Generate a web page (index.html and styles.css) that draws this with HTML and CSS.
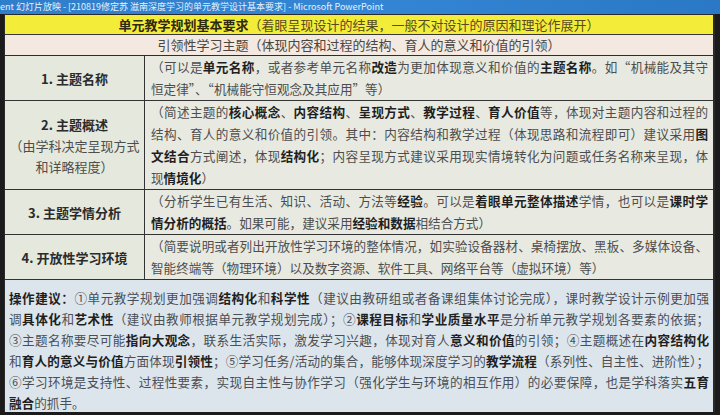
FILE: index.html
```html
<!DOCTYPE html>
<html lang="zh-CN">
<head>
<meta charset="utf-8">
<link rel="stylesheet" href="styles.css">
</head>
<body>
<div class="screen">
  <div class="titlebar">ent 幻灯片放映 - [210819修定苏 滋南深度学习的单元教学设计基本要求] - Microsoft PowerPoint</div>
  <div class="slide">
    <div class="hdr-yellow"><b>单元教学规划基本要求</b>（着眼呈现设计的结果，一般不对设计的原因和理论作展开）</div>
    <div class="hdr-beige">引领性学习主题（体现内容和过程的结构、育人的意义和价值的引领）</div>

    <div class="row">
      <div class="cell-l"><div class="lbl">1. 主题名称</div></div>
      <div class="cell-r">
        <div class="ln">（可以是<b>单元名称</b>，或者参考单元名称<b>改造</b>为更加体现意义和价值的<b>主题名称</b>。如“机械能及其守</div>
        <div class="ln last">恒定律”、“机械能守恒观念及其应用”等）</div>
      </div>
    </div>

    <div class="row">
      <div class="cell-l">
        <div class="lbl">2. 主题概述</div>
        <div class="sub">（由学科决定呈现方式</div>
        <div class="sub">和详略程度）</div>
      </div>
      <div class="cell-r">
        <div class="ln">（简述主题的<b>核心概念</b>、<b>内容结构</b>、<b>呈现方式</b>、<b>教学过程</b>、<b>育人价值</b>等，体现对主题内容和过程的</div>
        <div class="ln">结构、育人的意义和价值的引领。其中：内容结构和教学过程（体现思路和流程即可）建议采用<b>图</b></div>
        <div class="ln"><b>文结合</b>方式阐述，体现<b>结构化</b>；内容呈现方式建议采用现实情境转化为问题或任务名称来呈现，体</div>
        <div class="ln last">现<b>情境化</b>）</div>
      </div>
    </div>

    <div class="row">
      <div class="cell-l"><div class="lbl">3. 主题学情分析</div></div>
      <div class="cell-r">
        <div class="ln">（分析学生已有生活、知识、活动、方法等<b>经验</b>。可以是<b>着眼单元整体描述</b>学情，也可以是<b>课时学</b></div>
        <div class="ln last"><b>情分析的概括</b>。如果可能，建议采用<b>经验和数据</b>相结合方式）</div>
      </div>
    </div>

    <div class="row">
      <div class="cell-l"><div class="lbl">4. 开放性学习环境</div></div>
      <div class="cell-r">
        <div class="ln">（简要说明或者列出开放性学习环境的整体情况，如实验设备器材、桌椅摆放、黑板、多媒体设备、</div>
        <div class="ln last">智能终端等（物理环境）以及数字资源、软件工具、网络平台等（虚拟环境）等）</div>
      </div>
    </div>

    <div class="note">
      <div class="ln"><b>操作建议：</b>①单元教学规划更加强调<b>结构化</b>和<b>科学性</b>（建议由教研组或者备课组集体讨论完成），课时教学设计示例更加强</div>
      <div class="ln">调<b>具体化</b>和<b>艺术性</b>（建议由教师根据单元教学规划完成）；②<b>课程目标</b>和<b>学业质量水平</b>是分析单元教学规划各要素的依据；</div>
      <div class="ln">③主题名称要尽可能<b>指向大观念</b>，联系生活实际，激发学习兴趣，体现对育人<b>意义和价值</b>的引领；④主题概述在<b>内容结构化</b></div>
      <div class="ln">和<b>育人的意义与价值</b>方面体现<b>引领性</b>；⑤学习任务/活动的集合，能够体现深度学习的<b>教学流程</b>（系列性、自主性、进阶性）；</div>
      <div class="ln">⑥学习环境是支持性、过程性要素，实现自主性与协作学习（强化学生与环境的相互作用）的必要保障，也是学科落实<b>五育</b></div>
      <div class="ln last"><b>融合</b>的抓手。</div>
    </div>
  </div>
</div>
</body>
</html>
```

FILE: styles.css
```css
* { box-sizing: border-box; }
html, body { margin: 0; padding: 0; }
body {
  width: 720px;
  height: 415px;
  overflow: hidden;
  background: #1b1b1b;
  font-family: "Noto Sans CJK SC", "Noto Sans", sans-serif;
}
.screen {
  width: 720px;
  height: 415px;
  display: flex;
  flex-direction: column;
}
.titlebar {
  height: 14px;
  line-height: 14px;
  font-size: 9px;
  color: #e8f0fa;
  white-space: nowrap;
  overflow: hidden;
  background: linear-gradient(90deg, #2f7ecb 0%, #3486d4 50%, #2a78c6 100%);
}
.slide {
  margin-left: 4px;
  width: 711px;
  height: 398px;
  overflow: hidden;
  border-left: 1px solid #2a2a2a;
  border-right: 2px solid #2a2a2a;
  border-top: 1px solid #2a2a2a;
  background: #dfe6ec;
  font-size: 12.6px;
  color: #4d4d4d;
}
.ln { white-space: nowrap; text-align: justify; text-align-last: justify; }
.ln.last { text-align-last: left; }
b { font-weight: 700; color: #1f1f1f; }

.hdr-yellow {
  height: 20px;
  line-height: 19px;
  font-size: 13px;
  text-align: center;
  background: #f3ed3a;
  color: #5a4b1e;
  border-bottom: 1px solid #3a3a3a;
}
.hdr-yellow b { color: #2e2a10; }
.hdr-beige {
  height: 21px;
  line-height: 20px;
  font-size: 13px;
  text-align: center;
  background: #f3e9e0;
  color: #4a4540;
  border-bottom: 1px solid #2e2e2e;
}
.row {
  display: grid;
  grid-template-columns: 140px 1fr;
  border-bottom: 1px solid #333;
  background: #e8eae1;
}
.cell-l {
  border-right: 1px solid #333;
  background: #e4e8dd;
  display: flex;
  flex-direction: column;
  justify-content: center;
  align-items: center;
  line-height: 21px;
  font-size: 13px;
}
.lbl { font-weight: 700; color: #2b2b2b; }
.sub { color: #4d4d4d; }
.cell-r {
  padding: 0 5px 0 6px;
  line-height: 22px;
}
.note {
  padding: 7px 4px 0 4px;
  line-height: 21px;
  background: #dde5ec;
  color: #4a4f55;
}
```
